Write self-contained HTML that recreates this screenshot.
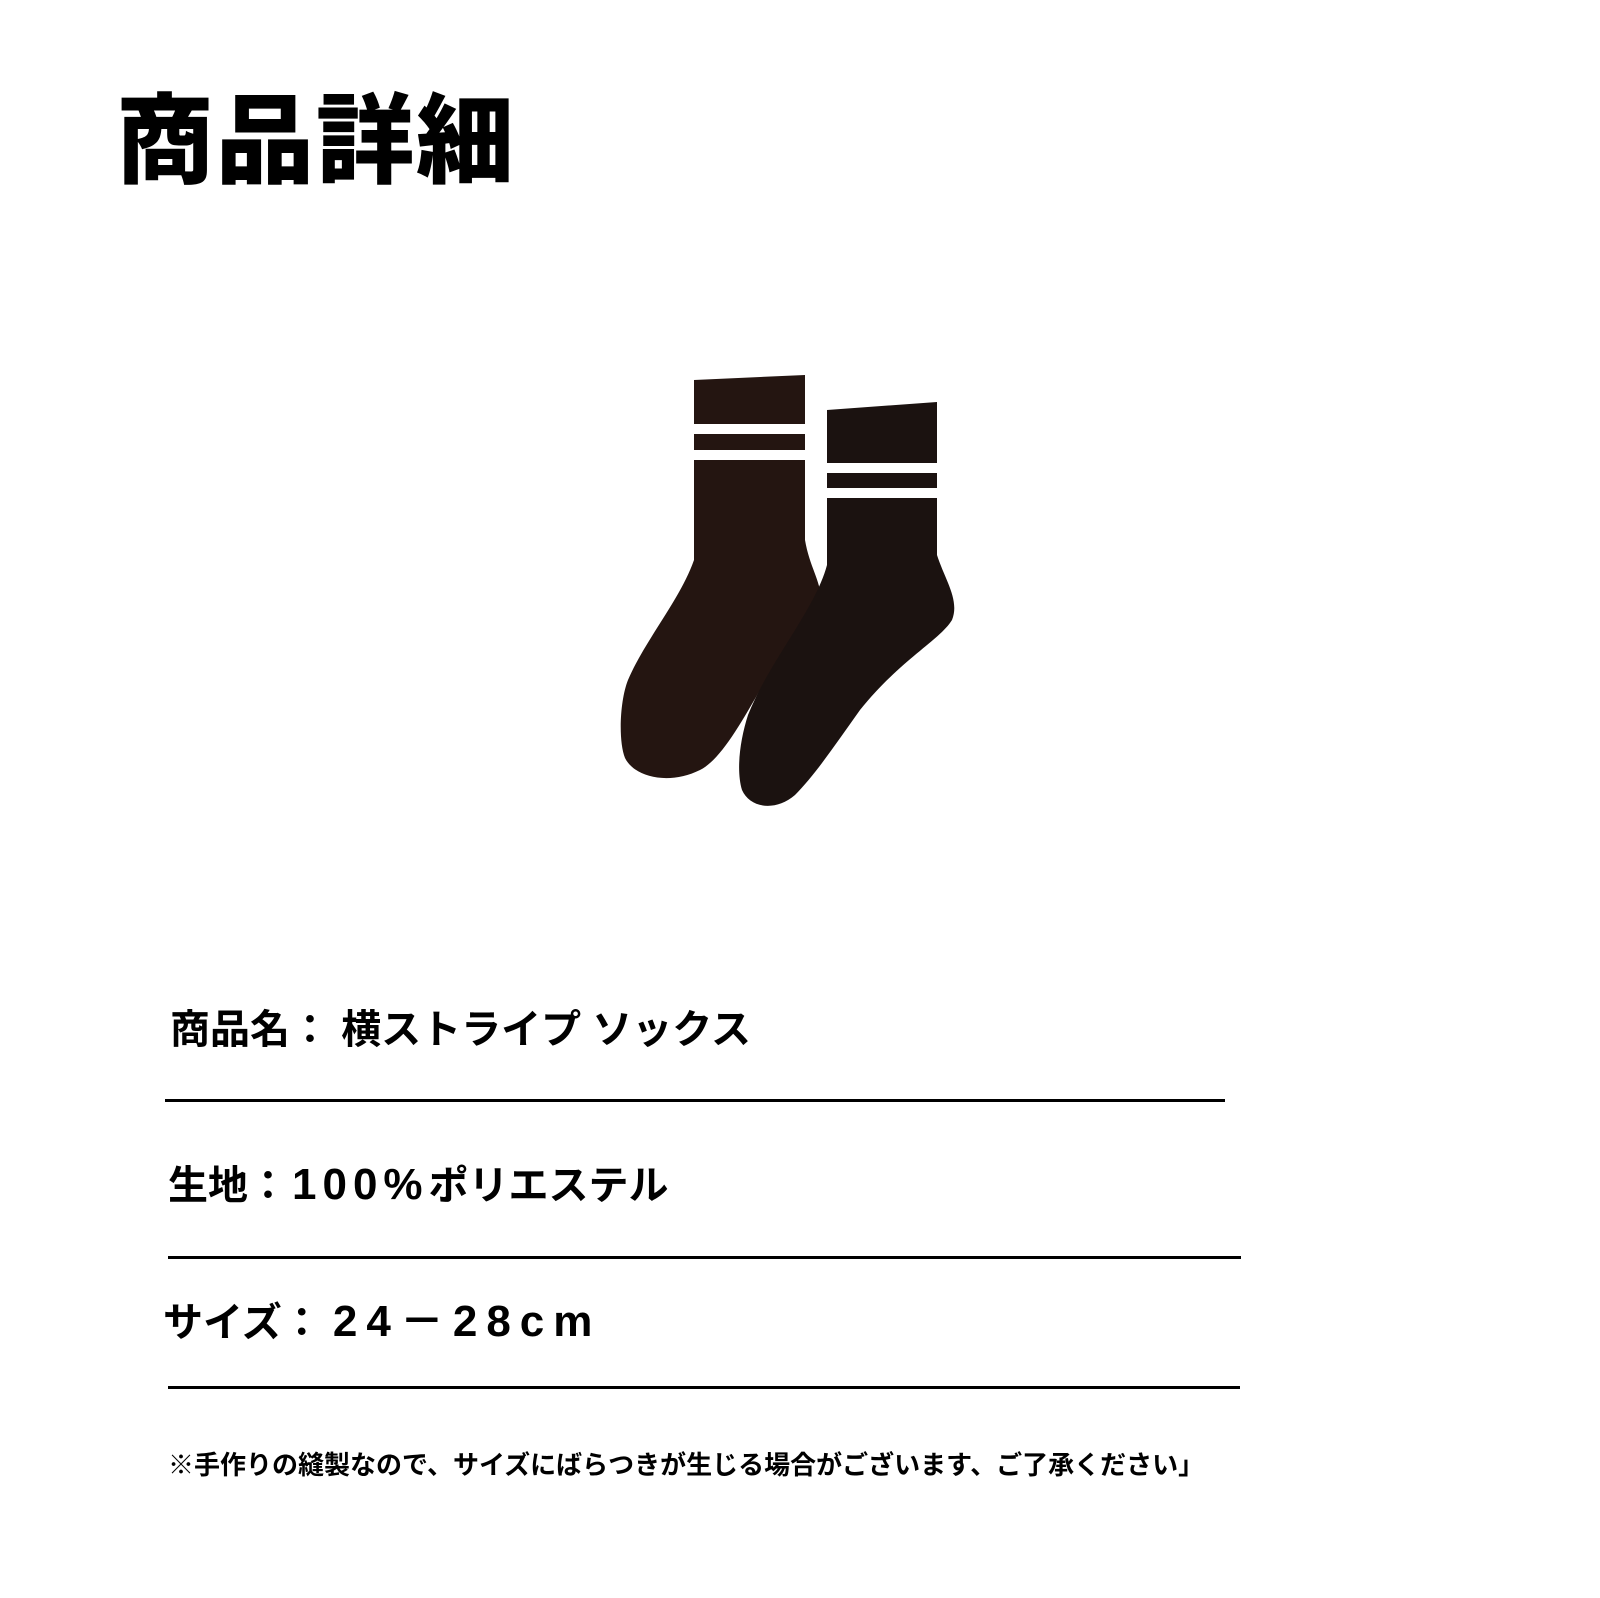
<!DOCTYPE html>
<html><head><meta charset="utf-8"><style>
body{margin:0;width:1600px;height:1598px;background:#fff;position:relative;overflow:hidden;font-family:"Liberation Sans","Noto Sans CJK JP",sans-serif;font-weight:bold;color:#000}
.t{position:absolute;white-space:nowrap;line-height:1}
.l{position:absolute;height:3px;background:#000}
.d{letter-spacing:9px}
</style></head><body>
<div class="t" style="left:116px;top:92px;font-size:98px;font-weight:900;letter-spacing:2px">商品詳細</div>
<svg style="position:absolute;left:0;top:0" width="1600" height="1598">
<path d="M694,380 L805,375 L805,540 C810,570 824,585 820,605 C815,625 790,640 760,690 C740,725 720,760 700,770 C670,785 635,778 625,758 C618,740 620,700 628,680 C645,640 680,600 694,560 Z" fill="#241511"/>
<rect x="694" y="424" width="111" height="10" fill="#fff"/>
<rect x="694" y="450" width="111" height="10" fill="#fff"/>
<path d="M827,410 L937,402 L937,555 C945,580 960,600 952,620 C940,640 900,660 860,710 C835,745 815,775 795,795 C775,812 750,808 742,790 C736,770 740,740 748,715 C770,660 815,610 827,565 Z" fill="#1b1210"/>
<rect x="827" y="463" width="110" height="10" fill="#fff"/>
<rect x="827" y="488" width="110" height="10" fill="#fff"/>
</svg>
<div class="t" style="left:170px;top:1010px;font-size:40px">商品名：&nbsp;横ストライプ ソックス</div>
<div class="l" style="left:165px;top:1099px;width:1060px"></div>
<div class="t" style="left:168px;top:1163px;font-size:40px">生地：<span style="font-size:44px;letter-spacing:6px;margin-left:4px">100%</span>ポリエステル</div>
<div class="l" style="left:168px;top:1256px;width:1073px"></div>
<div class="t" style="left:163px;top:1300px;font-size:40px">サイズ：&nbsp;<span style="font-size:44px" class="d">24－28cm</span></div>
<div class="l" style="left:168px;top:1386px;width:1072px"></div>
<div class="t" style="left:168px;top:1452px;font-size:26px">※手作りの縫製なので、サイズにばらつきが生じる場合がございます、ご了承ください」</div>
</body></html>
